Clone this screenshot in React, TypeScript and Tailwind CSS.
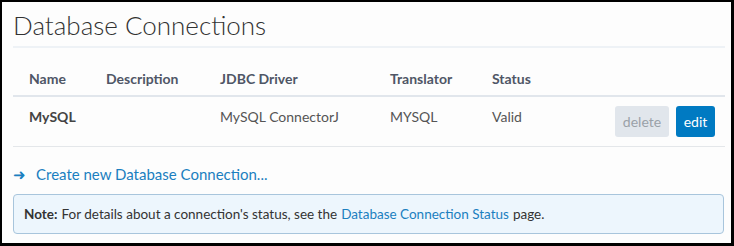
const cols = ["Name", "Description", "JDBC Driver", "Translator", "Status"]

export default function App() {
  return (
    <div
      className="h-[246px] w-[734px] border-b-[3px] border-l-2 border-r-[3px] border-t-2 border-black bg-[#fdfdfd] text-[#4c4c4c]"
      style={{ fontFamily: "Lato, 'Liberation Sans', sans-serif" }}
    >
      <div className="px-[11px] pr-[6px]">
        <h1 className="pt-[6px] text-[26px] font-light leading-[34px] text-[#323232]">Database Connections</h1>
        <div className="mt-[4px] h-[2px] bg-[#eef2f6]" />

        <div className="mt-[20px] flex h-[27px] items-start text-[14px] font-bold text-[#4f5666]">
          <div className="w-[77px] pl-[16px] box-content">{cols[0]}</div>
          <div className="w-[114px]">{cols[1]}</div>
          <div className="w-[170px]">{cols[2]}</div>
          <div className="w-[102px]">{cols[3]}</div>
          <div>{cols[4]}</div>
        </div>
        <div className="h-[2px] bg-[#e1e6ec]" />

        <div className="flex h-[49px] pt-[6px] text-[14px] text-[#555]">
          <div className="w-[77px] pl-[16px] pt-[3px] font-bold text-[#444] box-content">MySQL</div>
          <div className="w-[114px]" />
          <div className="w-[170px] pt-[3px]">MySQL ConnectorJ</div>
          <div className="w-[102px] pt-[3px]">MYSQL</div>
          <div className="flex-1 pt-[3px]">Valid</div>
          <div className="mr-[10px] flex gap-[7px] pt-[3px]">
            <button className="h-[31px] w-[54px] rounded-[3px] bg-[#e1e6ec] text-[14px] text-[#9aa1a8]">delete</button>
            <button className="h-[31px] w-[39px] rounded-[3px] bg-[#007ac2] text-[14px] text-white">edit</button>
          </div>
        </div>
        <div className="h-px bg-[#e4e7ea]" />

        <div className="mt-[16px] flex items-center text-[15px] leading-[22px] text-[#1b7fc0]">
          <span className="w-[23px] text-[15px]">&#x279C;</span>
          <span>Create new Database Connection...</span>
        </div>

        <div className="mt-[9px] mr-[1px] flex h-[40px] items-center rounded-[4px] border border-[#a8c5dc] bg-[#edf6fd] px-[10px] text-[13.5px] text-[#333]">
          <span className="font-bold">Note:</span>
          <span className="ml-[4px]">For details about a connection's status, see the </span>
          <span className="ml-[4px] text-[#1b7fc0]">Database Connection Status</span>
          <span className="ml-[4px]">page.</span>
        </div>
      </div>
    </div>
  )
}
